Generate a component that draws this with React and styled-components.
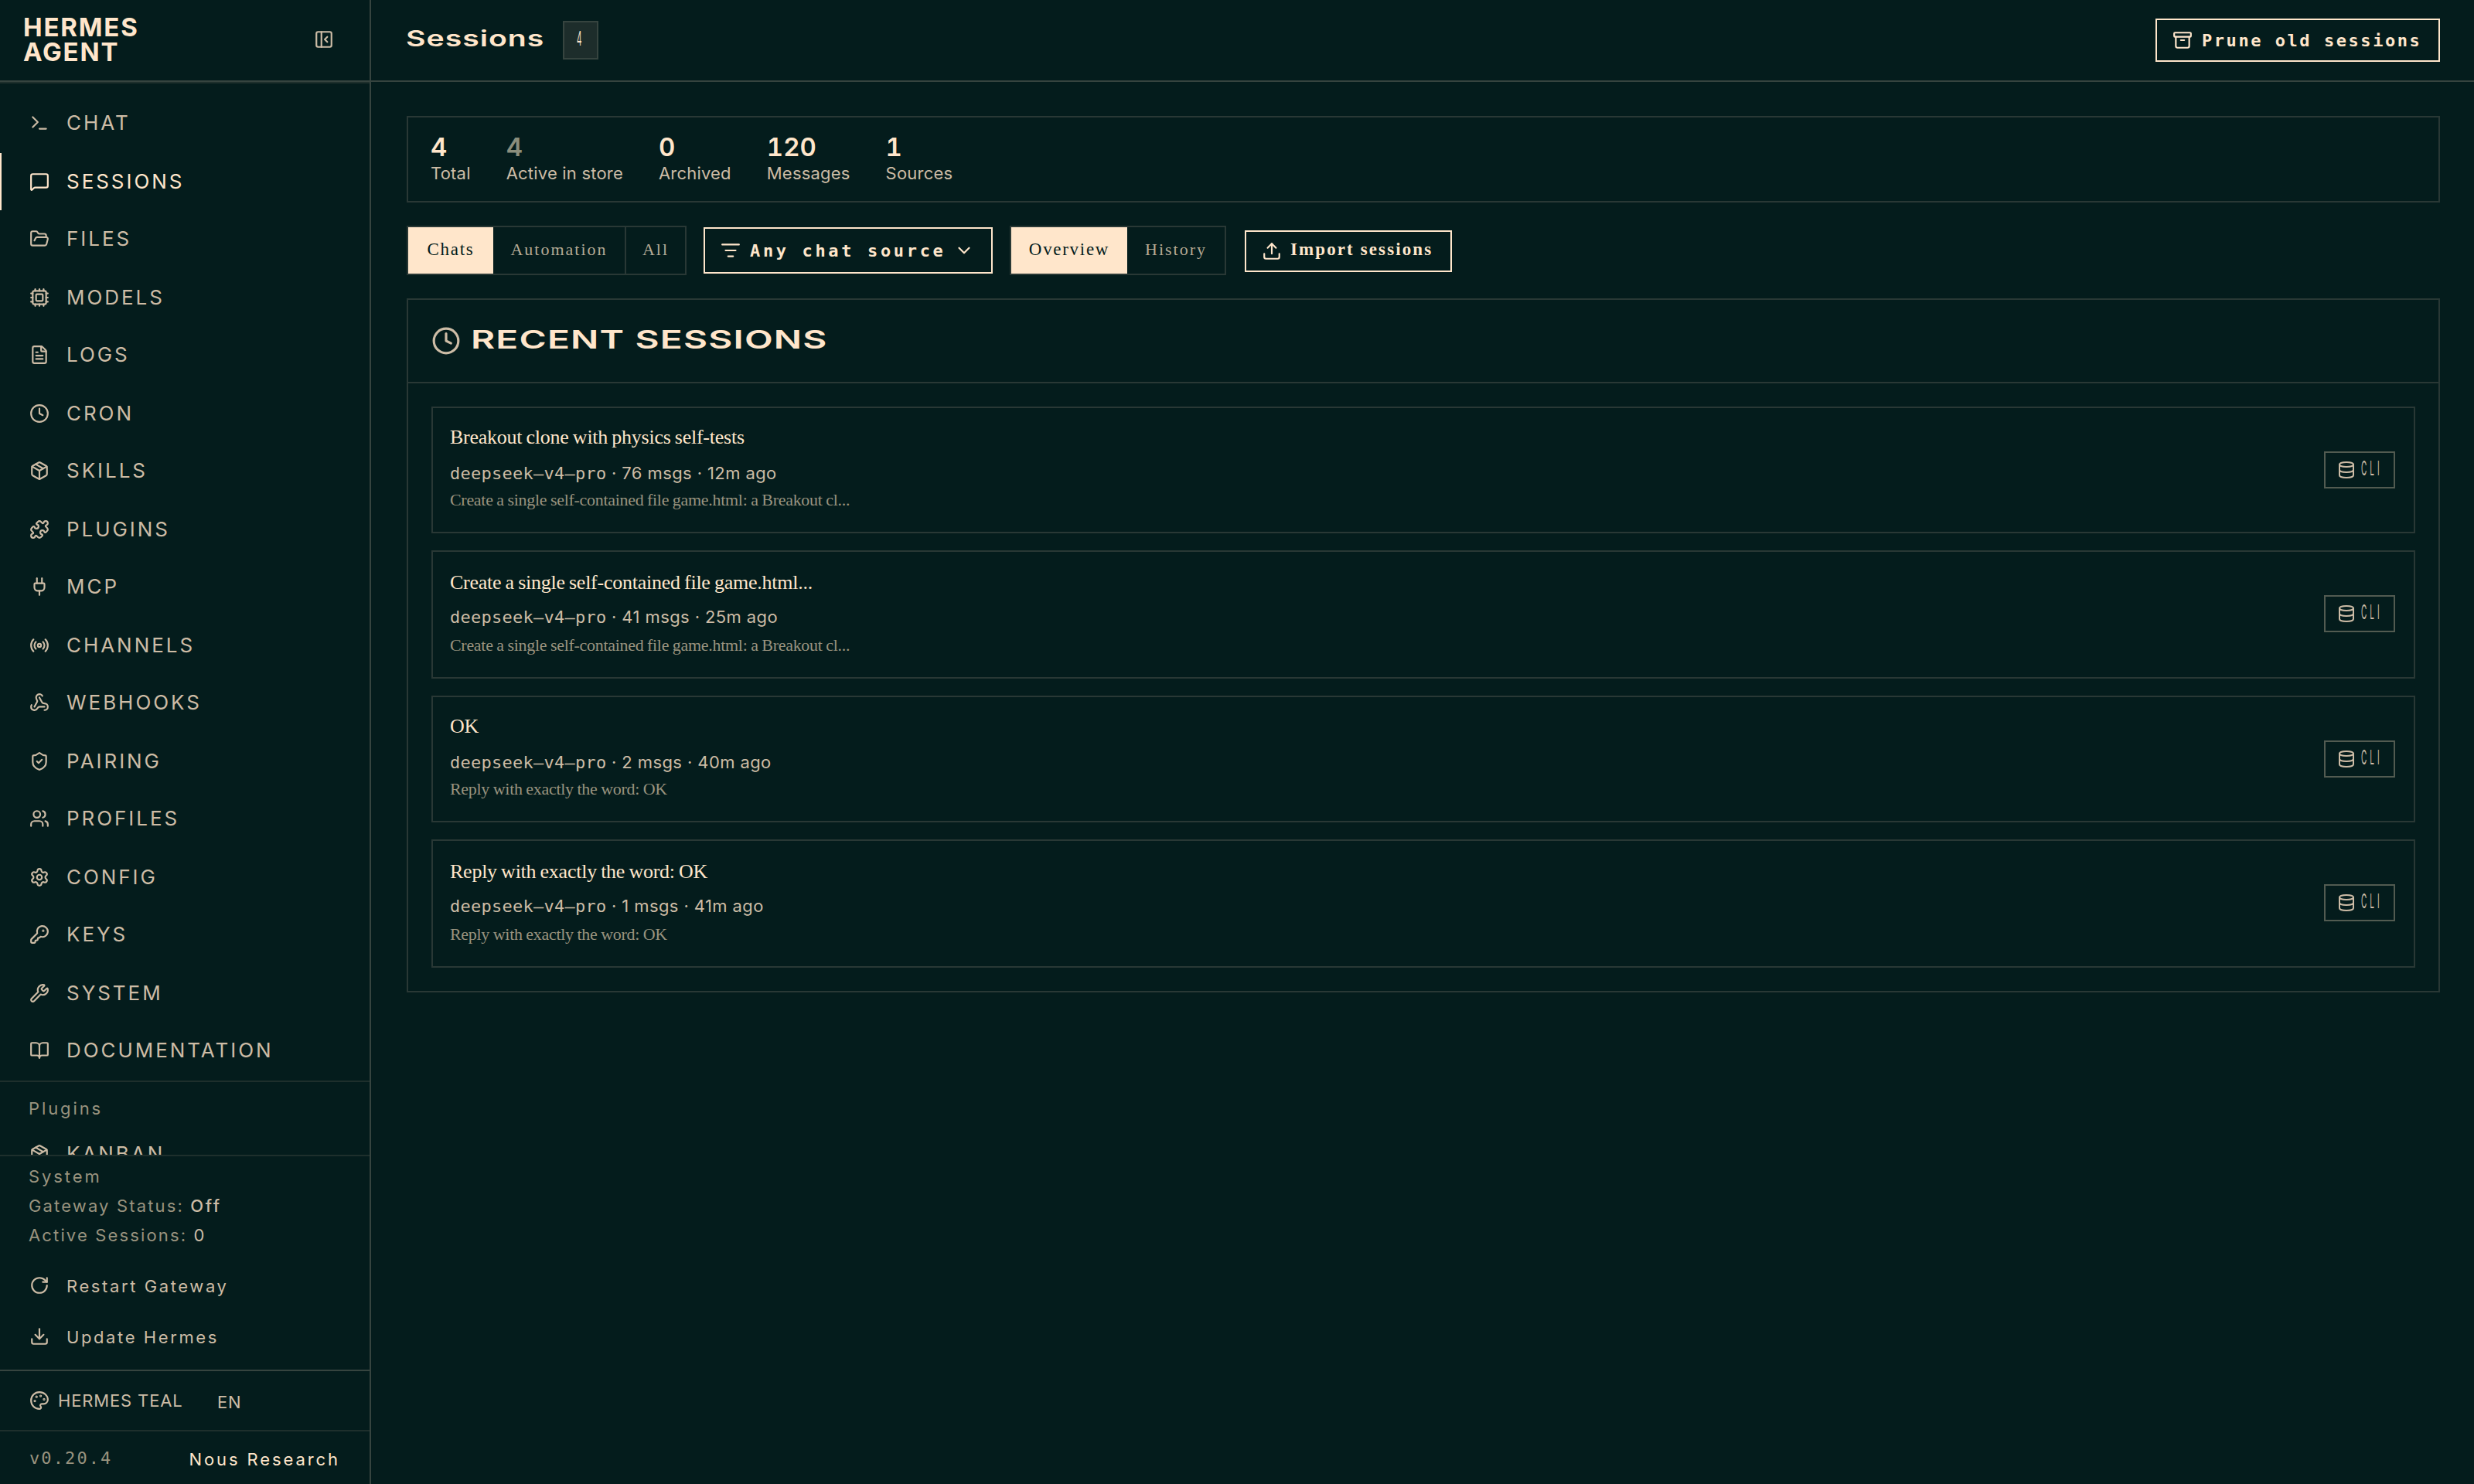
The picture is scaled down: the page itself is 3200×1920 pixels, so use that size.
import React from "react";
import styled, { createGlobalStyle } from "styled-components";
import {
  Archive,
  BookOpen,
  ChevronDown,
  Clock,
  Cpu,
  Database,
  Download,
  FileText,
  FolderOpen,
  KeyRound,
  ListFilter,
  MessageSquare,
  Package,
  Palette,
  PanelLeftClose,
  Plug,
  Puzzle,
  Radio,
  RotateCw,
  Settings,
  ShieldCheck,
  Terminal,
  Upload,
  Users,
  Webhook,
  Wrench,
} from "lucide-react";

const bg = "#041c1c";
const cream = "#ffe6cb";
const muted = "#cdbca6";
const dim = "#99937f";
const line = "#36443f";
const lineSoft = "#293835";
const lineFaint = "#1e2f2c";

const sans = `"Inter", "Liberation Sans", sans-serif`;
const serif = `"Liberation Serif", "Times New Roman", serif`;
const mono = `"DejaVu Sans Mono", "Liberation Mono", monospace`;

const GlobalStyle = createGlobalStyle`
  * {
    box-sizing: border-box;
  }

  body {
    margin: 0;
    background: ${bg};
    color: ${cream};
    font-family: ${sans};
  }

  button {
    margin: 0;
    padding: 0;
    background: none;
    border: none;
    color: inherit;
    font: inherit;
  }

  svg {
    display: block;
    flex-shrink: 0;
  }
`;

const Page = styled.div`
  display: flex;
  width: 3200px;
  height: 1920px;
  overflow: hidden;
`;

/* Sidebar */

const Sidebar = styled.aside`
  display: flex;
  flex-direction: column;
  flex-shrink: 0;
  width: 480px;
  border-right: 2px solid ${line};
`;

const Brand = styled.div`
  display: flex;
  flex-shrink: 0;
  justify-content: space-between;
  align-items: center;
  height: 106px;
  padding: 0 46px 2px 30px;
  border-bottom: 2px solid ${line};
  color: ${muted};
`;

const BrandName = styled.div`
  color: ${cream};
  font-size: 33px;
  font-weight: 700;
  line-height: 32px;
  letter-spacing: 1.8px;
`;

const Nav = styled.nav`
  flex: 1;
  min-height: 0;
  overflow: hidden;
  border-top: 2px solid ${lineFaint};
`;

const NavList = styled.div`
  padding-top: ${(props) => props.$top || 0}px;
`;

const NavItem = styled.a`
  display: flex;
  align-items: center;
  gap: 22px;
  height: 74px;
  padding-left: ${(props) => (props.$active ? 36 : 38)}px;
  border-left: ${(props) => (props.$active ? `2px solid ${cream}` : "none")};
  color: ${(props) => (props.$active ? cream : muted)};
  font-size: 26px;
  letter-spacing: 2.95px;
  text-transform: uppercase;

  &:nth-child(odd) {
    margin-bottom: 2px;
  }

  & > span {
    padding-bottom: 2px;
  }
`;

const PluginSection = styled.div`
  border-top: 2px solid ${lineFaint};
`;

const SectionLabel = styled.div`
  padding-left: 37px;
  color: ${dim};
  font-size: 22px;
  line-height: 38px;
  letter-spacing: 2.9px;

  ${PluginSection} > & {
    padding-top: 13px;
    line-height: 43px;
  }
`;

const SystemSection = styled.div`
  flex-shrink: 0;
  height: 278px;
  padding-top: 7px;
  border-top: 2px solid ${lineFaint};
`;

const StatusLine = styled.div`
  padding-left: 37px;
  color: ${dim};
  font-size: 22px;
  line-height: 38px;
  letter-spacing: 2.15px;

  & > span {
    color: ${muted};
    font-weight: ${(props) => (props.$strong ? 500 : 400)};
    letter-spacing: 2.6px;
  }
`;

const Actions = styled.div`
  padding-top: 14px;
`;

const Action = styled.button`
  display: flex;
  align-items: center;
  gap: 22px;
  height: 66px;
  padding-left: 38px;
  color: ${muted};
  font-size: 22px;
  letter-spacing: 2.6px;

  & > svg {
    margin-top: -2px;
  }
`;

const ThemeRow = styled.div`
  display: flex;
  flex-shrink: 0;
  align-items: center;
  height: 78px;
  padding-left: 38px;
  border-top: 2px solid ${line};
  color: ${muted};
  font-size: 22px;
`;

const ThemeName = styled.span`
  width: 217px;
  padding-left: 11px;
  letter-spacing: 0.85px;
`;

const Lang = styled.span`
  padding-top: 4px;
  letter-spacing: 0.8px;
`;

const VersionRow = styled.div`
  display: flex;
  flex-shrink: 0;
  justify-content: space-between;
  align-items: center;
  height: 70px;
  padding: 4px 38px 0;
  border-top: 2px solid ${lineFaint};
  font-size: 22px;
`;

const Version = styled.span`
  padding-bottom: 3px;
  color: ${dim};
  font-family: ${mono};
  letter-spacing: 2.1px;
`;

const Org = styled.span`
  letter-spacing: 2.9px;
`;

/* Main column */

const Main = styled.main`
  flex: 1;
  min-width: 0;
`;

const Topbar = styled.header`
  display: flex;
  align-items: center;
  height: 106px;
  padding: 0 44px 0 45px;
  border-bottom: 2px solid ${line};
`;

/* Extended face, widened from the regular sans */
const WideText = styled.span`
  display: inline-block;
  width: ${(props) => props.$width}px;
  padding-bottom: 4px;
  font-size: ${(props) => props.$size}px;
  font-weight: 600;
  line-height: 1;
  letter-spacing: ${(props) => props.$spacing}px;
  white-space: nowrap;

  & > span {
    display: inline-block;
    transform: scaleX(${(props) => props.$stretch});
    transform-origin: left center;
  }
`;

/* Compressed face for badges */
const NarrowText = styled.span`
  display: inline-block;
  width: ${(props) => props.$width}px;
  padding-bottom: ${(props) => props.$lift || 0}px;
  font-size: 25px;
  font-weight: 400;
  line-height: 1;
  letter-spacing: 10px;
  white-space: nowrap;

  & > span {
    display: inline-block;
    transform: scaleX(0.4);
    transform-origin: left center;
  }
`;

const CountBadge = styled.span`
  display: flex;
  align-items: center;
  justify-content: center;
  width: 46px;
  height: 50px;
  padding: 0 3px 3px 0;
  margin-left: 24px;
  background: #1d2d2b;
  border: 2px solid ${line};
`;

const PruneButton = styled.button`
  display: flex;
  align-items: center;
  gap: 12px;
  width: 368px;
  height: 56px;
  margin-left: auto;
  padding-left: 20px;
  border: 2px solid ${cream};
  font-family: ${mono};
  font-size: 22px;
  font-weight: 700;
  letter-spacing: 2.55px;
  white-space: nowrap;
`;

const Content = styled.div`
  padding: 44px 44px 0 46px;
`;

const Stats = styled.section`
  display: flex;
  gap: 46px;
  height: 112px;
  padding: 20px 29px;
  border: 2px solid ${lineSoft};
`;

const Stat = styled.div`
  & > strong {
    display: block;
    color: ${(props) => (props.$dim ? "#8b8e7c" : cream)};
    font-size: 33px;
    font-weight: 600;
    font-variant-numeric: tabular-nums;
    line-height: 36px;
  }

  & > span {
    display: block;
    color: ${muted};
    font-size: 22px;
    line-height: 32px;
    letter-spacing: 0.2px;
  }
`;

const Filters = styled.div`
  display: flex;
  align-items: center;
  gap: 22px;
  height: 64px;
  margin-top: 30px;
`;

const Segmented = styled.div`
  display: flex;
  height: 64px;
  border: 2px solid ${lineSoft};
`;

const Segment = styled.button`
  width: ${(props) => props.$width}px;
  padding-bottom: 2px;
  background: ${(props) => (props.$active ? cream : "transparent")};
  color: ${(props) => (props.$active ? bg : "#b5aa95")};
  border-left: ${(props) => (props.$divided ? `2px solid ${lineSoft}` : "none")};
  font-family: ${serif};
  font-size: ${(props) => (props.$active ? 23 : 22)}px;
  letter-spacing: ${(props) => (props.$active ? 1.7 : 2)}px;
`;

const SourceSelect = styled.button`
  display: flex;
  align-items: center;
  width: 374px;
  height: 60px;
  padding-left: 20px;
  border: 2px solid ${cream};
  font-family: ${mono};
  font-size: 22px;
  font-weight: 700;
  letter-spacing: 3.65px;
  white-space: nowrap;

  & > span {
    width: 264px;
    padding-left: 12px;
    margin-right: 12px;
  }
`;

const ImportButton = styled.button`
  display: flex;
  align-items: center;
  gap: 11px;
  width: 268px;
  height: 54px;
  margin: 2px 0 0 2px;
  padding-left: 20px;
  border: 2px solid ${cream};
  font-family: ${serif};
  font-size: 23px;
  font-weight: 700;
  letter-spacing: 2.1px;
  white-space: nowrap;

  & > span {
    padding-bottom: 4px;
  }
`;

const Panel = styled.section`
  margin-top: 30px;
  height: 898px;
  border: 2px solid ${lineSoft};
`;

const PanelHeader = styled.div`
  display: flex;
  align-items: center;
  gap: 13px;
  height: 108px;
  padding: 0 30px 0;
  border-bottom: 2px solid ${lineSoft};

  & > svg {
    color: ${muted};
  }
`;

const SessionList = styled.div`
  display: flex;
  flex-direction: column;
  gap: 22px;
  padding: 30px;
`;

const Title = styled.div`
  margin-bottom: 13px;
  font-family: ${serif};
  font-size: 26px;
  line-height: 36px;
  letter-spacing: -0.25px;
  word-spacing: -1px;
`;

const Meta = styled.div`
  color: ${muted};
  font-size: 22px;
  line-height: 30px;
  letter-spacing: 0.4px;

  & > span {
    font-family: ${mono};
    letter-spacing: 0.25px;
  }
`;

const Preview = styled.div`
  margin-top: 4px;
  color: ${dim};
  font-family: ${serif};
  font-size: 22px;
  line-height: 30px;
  letter-spacing: -0.3px;
  word-spacing: -0.5px;
`;

const Card = styled.article`
  display: flex;
  justify-content: space-between;
  align-items: flex-start;
  height: 164px;
  padding: 20px 24px 0 22px;
  border: 2px solid ${lineSoft};

  &:nth-child(even) {
    height: 166px;
    padding-top: 22px;

    ${Title} {
      margin-bottom: 11px;
    }

    ${Preview} {
      margin-top: 6px;
    }
  }
`;

const SourceBadge = styled.div`
  display: flex;
  align-items: center;
  gap: 7px;
  align-self: center;
  width: 92px;
  height: 48px;
  margin-top: -20px;
  padding-left: 15px;
  border: 2px solid #525b51;
  color: ${muted};

  ${Card}:nth-child(even) & {
    margin-top: -24px;
  }
`;

const navItems = [
  { label: "Chat", icon: Terminal },
  { label: "Sessions", icon: MessageSquare, active: true },
  { label: "Files", icon: FolderOpen },
  { label: "Models", icon: Cpu },
  { label: "Logs", icon: FileText },
  { label: "Cron", icon: Clock },
  { label: "Skills", icon: Package },
  { label: "Plugins", icon: Puzzle },
  { label: "MCP", icon: Plug },
  { label: "Channels", icon: Radio },
  { label: "Webhooks", icon: Webhook },
  { label: "Pairing", icon: ShieldCheck },
  { label: "Profiles", icon: Users },
  { label: "Config", icon: Settings },
  { label: "Keys", icon: KeyRound },
  { label: "System", icon: Wrench },
  { label: "Documentation", icon: BookOpen },
];

const stats = [
  { value: "4", label: "Total" },
  { value: "4", label: "Active in store", dim: true },
  { value: "0", label: "Archived" },
  { value: "120", label: "Messages" },
  { value: "1", label: "Sources" },
];

const sessions = [
  {
    title: "Breakout clone with physics self-tests",
    model: "deepseek—v4—pro",
    info: "76 msgs · 12m ago",
    preview: "Create a single self-contained file game.html: a Breakout cl...",
  },
  {
    title: "Create a single self-contained file game.html...",
    model: "deepseek—v4—pro",
    info: "41 msgs · 25m ago",
    preview: "Create a single self-contained file game.html: a Breakout cl...",
  },
  {
    title: "OK",
    model: "deepseek—v4—pro",
    info: "2 msgs · 40m ago",
    preview: "Reply with exactly the word: OK",
  },
  {
    title: "Reply with exactly the word: OK",
    model: "deepseek—v4—pro",
    info: "1 msgs · 41m ago",
    preview: "Reply with exactly the word: OK",
  },
];

export default function App() {
  return (
    <Page>
      <GlobalStyle />
      <Sidebar>
        <Brand>
          <BrandName>
            HERMES
            <br />
            AGENT
          </BrandName>
          <PanelLeftClose size={26} />
        </Brand>
        <Nav>
          <NavList $top={14}>
            {navItems.map(({ label, icon: Icon, active }) => (
              <NavItem key={label} $active={active}>
                <Icon size={26} />
                <span>{label}</span>
              </NavItem>
            ))}
          </NavList>
          <PluginSection>
            <SectionLabel>Plugins</SectionLabel>
            <NavItem>
              <Package size={26} />
              <span>Kanban</span>
            </NavItem>
          </PluginSection>
        </Nav>
        <SystemSection>
          <SectionLabel>System</SectionLabel>
          <StatusLine $strong>
            Gateway Status: <span>Off</span>
          </StatusLine>
          <StatusLine>
            Active Sessions: <span>0</span>
          </StatusLine>
          <Actions>
            <Action>
              <RotateCw size={26} />
              Restart Gateway
            </Action>
            <Action>
              <Download size={26} />
              Update Hermes
            </Action>
          </Actions>
        </SystemSection>
        <ThemeRow>
          <Palette size={26} />
          <ThemeName>HERMES TEAL</ThemeName>
          <Lang>EN</Lang>
        </ThemeRow>
        <VersionRow>
          <Version>v0.20.4</Version>
          <Org>Nous Research</Org>
        </VersionRow>
      </Sidebar>
      <Main>
        <Topbar>
          <WideText $size={28} $stretch={1.4} $spacing={0.7} $width={179}>
            <span>Sessions</span>
          </WideText>
          <CountBadge>
            <NarrowText $width={8}>
              <span>4</span>
            </NarrowText>
          </CountBadge>
          <PruneButton>
            <Archive size={26} />
            Prune old sessions
          </PruneButton>
        </Topbar>
        <Content>
          <Stats>
            {stats.map((stat) => (
              <Stat key={stat.label} $dim={stat.dim}>
                <strong>{stat.value}</strong>
                <span>{stat.label}</span>
              </Stat>
            ))}
          </Stats>
          <Filters>
            <Segmented>
              <Segment $width={110} $active>
                Chats
              </Segment>
              <Segment $width={170}>Automation</Segment>
              <Segment $width={78} $divided>
                All
              </Segment>
            </Segmented>
            <SourceSelect>
              <ListFilter size={26} />
              <span>Any chat source</span>
              <ChevronDown size={26} />
            </SourceSelect>
            <Segmented>
              <Segment $width={150} $active>
                Overview
              </Segment>
              <Segment $width={126}>History</Segment>
            </Segmented>
            <ImportButton>
              <Upload size={26} />
              <span>Import sessions</span>
            </ImportButton>
          </Filters>
          <Panel>
            <PanelHeader>
              <Clock size={38} />
              <WideText $size={33} $stretch={1.45} $spacing={0.8} $width={460}>
                <span>RECENT SESSIONS</span>
              </WideText>
            </PanelHeader>
            <SessionList>
              {sessions.map((session) => (
                <Card key={session.title}>
                  <div>
                    <Title>{session.title}</Title>
                    <Meta>
                      <span>{session.model}</span> · {session.info}
                    </Meta>
                    <Preview>{session.preview}</Preview>
                  </div>
                  <SourceBadge>
                    <Database size={24} />
                    <NarrowText $width={36} $lift={4}>
                      <span>CLI</span>
                    </NarrowText>
                  </SourceBadge>
                </Card>
              ))}
            </SessionList>
          </Panel>
        </Content>
      </Main>
    </Page>
  );
}
